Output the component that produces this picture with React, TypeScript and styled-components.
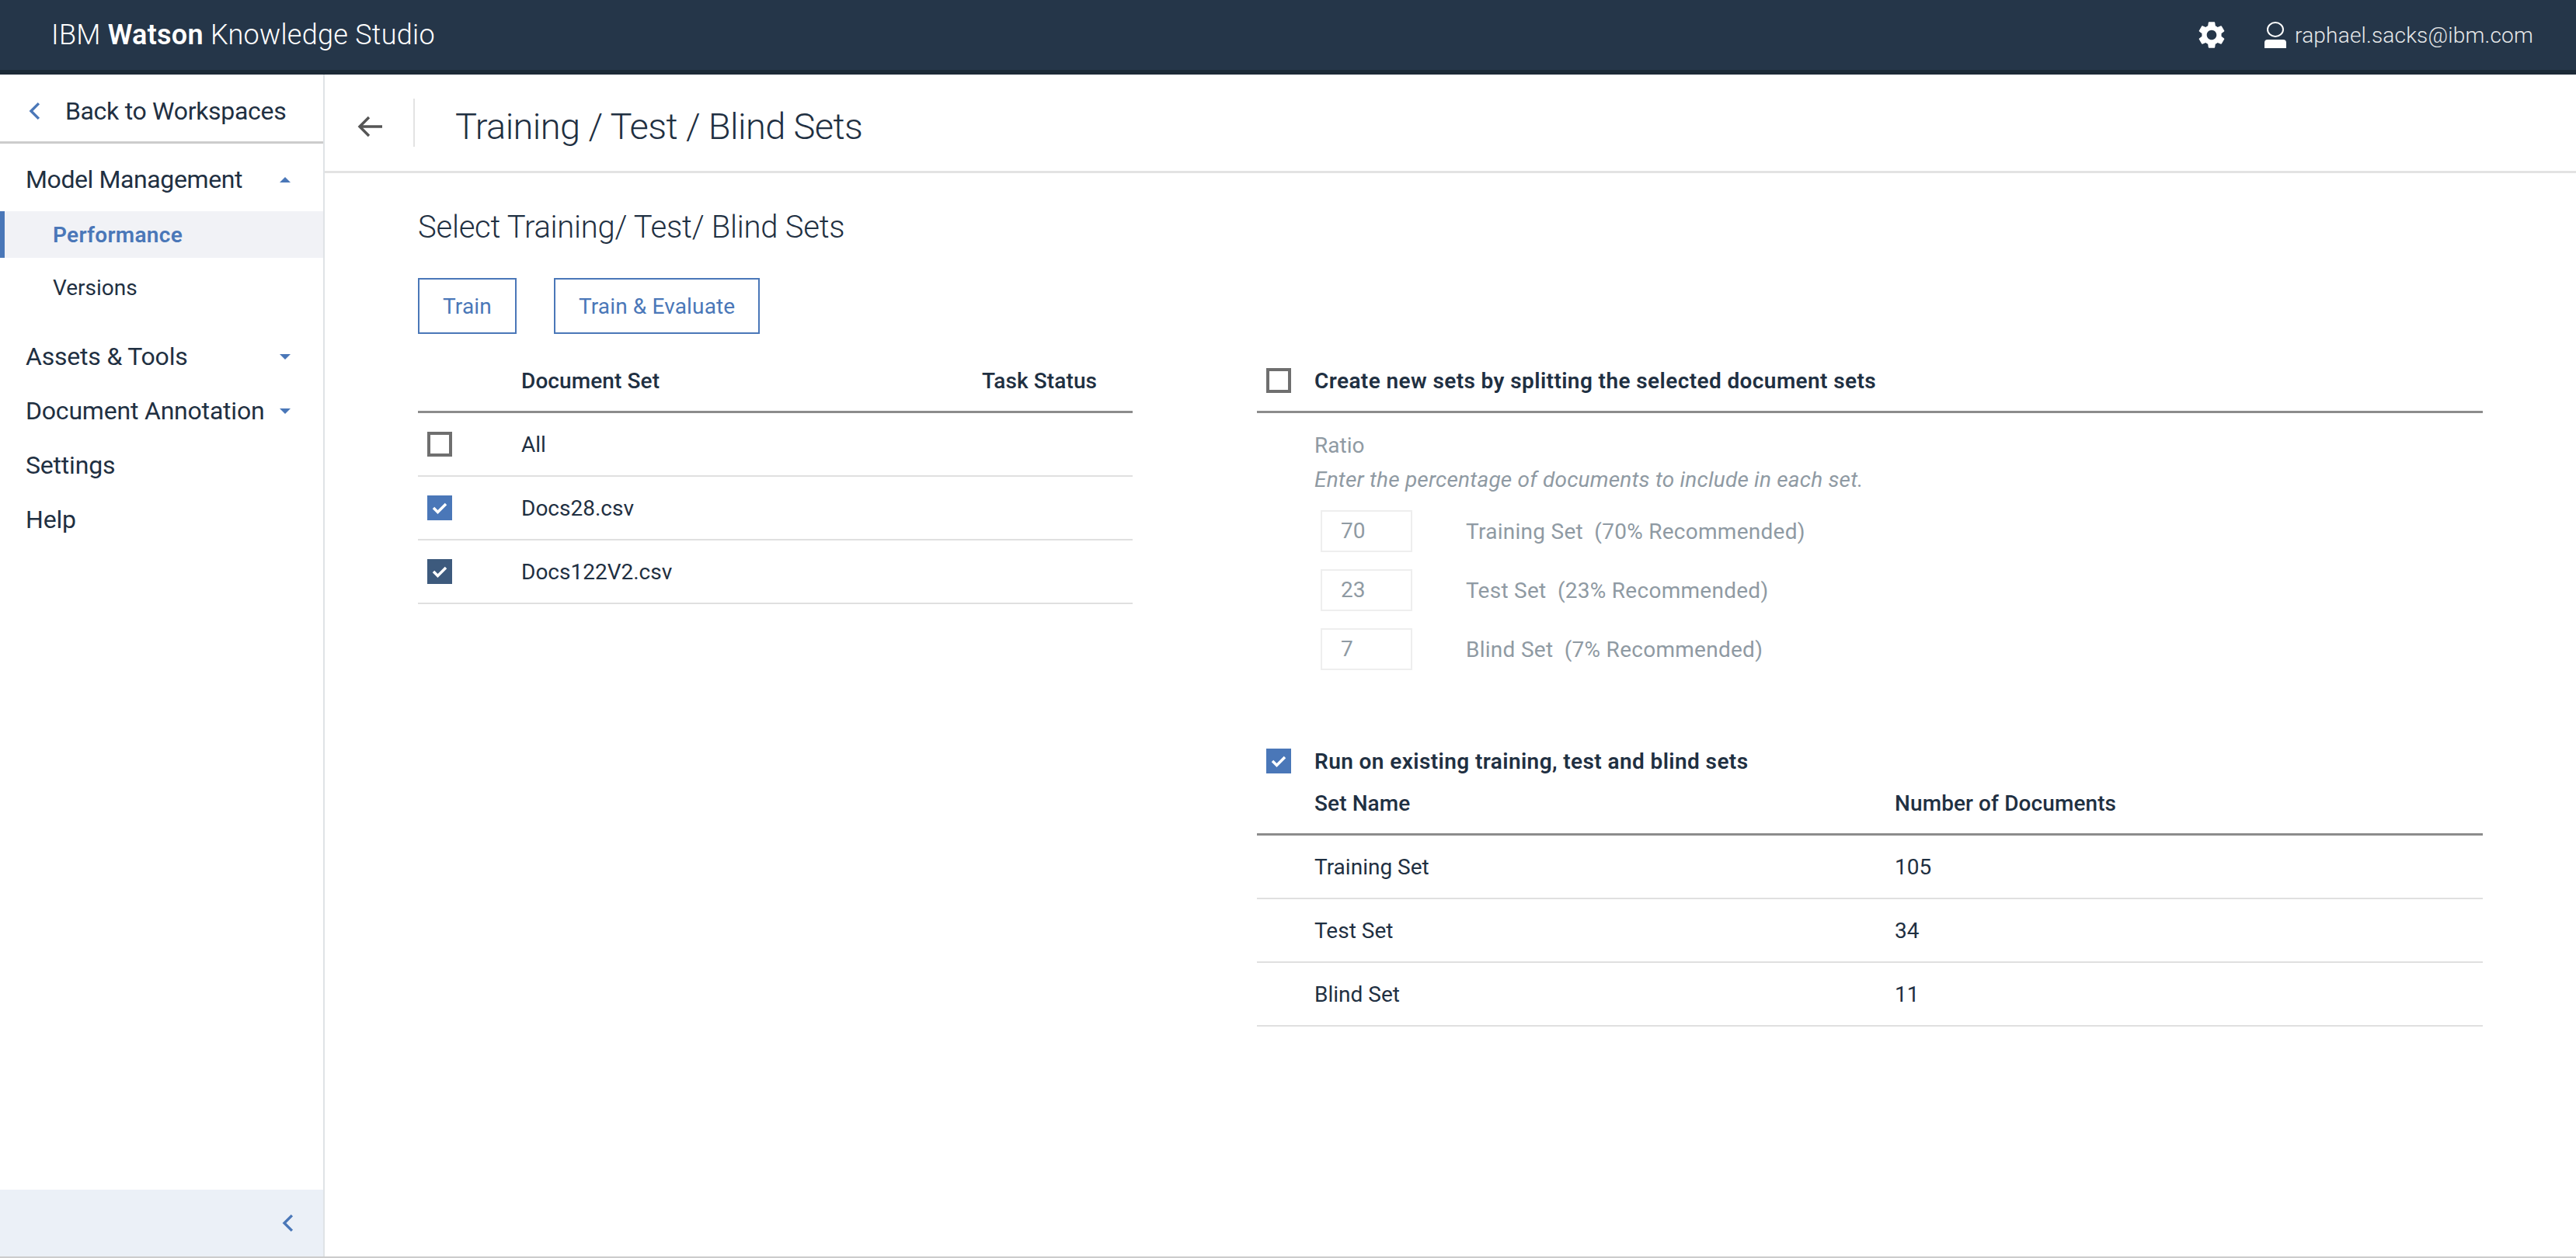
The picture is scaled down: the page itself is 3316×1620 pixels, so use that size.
import React from "react";
import styled, { createGlobalStyle } from "styled-components";
import { MdSettings } from "react-icons/md";

const GlobalStyle = createGlobalStyle`
  html, body {
    margin: 0;
    padding: 0;
    background: #fff;
    font-family: "Roboto", "Noto Sans", sans-serif;
    color: #1f3042;
  }
  * { box-sizing: border-box; }
`;

const blue = "#4a77b8";
const ink = "#1f3042";
const faded = "#8f9aa3";

const Page = styled.div`
  width: 3316px;
  height: 1620px;
  display: flex;
  flex-direction: column;
  border-bottom: 2px solid #ccc;
  overflow: hidden;
`;

const TopBar = styled.header`
  height: 96px;
  flex: none;
  background: #253649;
  border-bottom: 6px solid #1c2a37;
  display: flex;
  align-items: center;
  padding: 0 55px 0 66px;
  color: #fff;
`;

const Brand = styled.div`
  font-size: 36px;
  font-weight: 300;
  letter-spacing: 0.28px;
  flex: 1;
  b { font-weight: 600; }
`;

const GearButton = styled.div`
  display: flex;
  margin-right: 47px;
`;

const UserName = styled.div`
  display: flex;
  align-items: center;
  gap: 11px;
  font-size: 28px;
  font-weight: 300;
  letter-spacing: 0.2px;
  color: #e6e8ea;
`;

const Body = styled.div`
  flex: 1;
  display: flex;
  min-height: 0;
`;

const Sidebar = styled.aside`
  width: 418px;
  flex: none;
  border-right: 2px solid #dfe3e6;
  display: flex;
  flex-direction: column;
`;

const BackLink = styled.div`
  height: 89px;
  flex: none;
  border-bottom: 3px solid #ccc;
  display: flex;
  align-items: center;
  gap: 32px;
  padding: 8px 0 0 37px;
  font-size: 32px;
  letter-spacing: -0.3px;
`;

const Nav = styled.nav`
  flex: 1;
  padding-top: 11px;
`;

const NavItem = styled.div`
  height: 70px;
  display: flex;
  align-items: center;
  justify-content: space-between;
  padding: 0 42px 0 33px;
  font-size: 32px;
  letter-spacing: -0.2px;
`;

const NavParent = styled(NavItem)`
  letter-spacing: -0.4px;
`;

const SubList = styled.div`
  padding: 6px 0 16px;
`;

const SubItem = styled.div<{ $active?: boolean }>`
  height: 60px;
  margin-bottom: 8px;
  display: flex;
  align-items: center;
  padding-left: ${(p) => (p.$active ? 62 : 68)}px;
  font-size: 28px;
  letter-spacing: ${(p) => (p.$active ? 0.3 : 0)}px;
  font-weight: ${(p) => (p.$active ? 600 : 400)};
  color: ${(p) => (p.$active ? blue : ink)};
  background: ${(p) => (p.$active ? "#f1f2f6" : "transparent")};
  border-left: ${(p) => (p.$active ? `6px solid ${blue}` : "none")};
`;

const Caret = styled.span<{ $up?: boolean }>`
  width: 0;
  height: 0;
  border-left: 7px solid transparent;
  border-right: 7px solid transparent;
  ${(p) =>
    p.$up ? `border-bottom: 7px solid ${blue};` : `border-top: 7px solid ${blue};`}
`;

const Collapse = styled.div`
  height: 86px;
  flex: none;
  background: #ebf0f7;
  display: flex;
  align-items: center;
  justify-content: flex-end;
  padding-right: 38px;
`;

const Main = styled.main`
  flex: 1;
  min-width: 0;
  display: flex;
  flex-direction: column;
`;

const TitleBar = styled.div`
  height: 127px;
  flex: none;
  border-bottom: 3px solid #e3e3e3;
  display: flex;
  align-items: center;
  padding-left: 42px;
`;

const BackArrow = styled.div`
  display: flex;
  margin: 10px 40px 0 0;
`;

const TitleDivider = styled.div`
  width: 2px;
  height: 62px;
  background: #e3e3e3;
  margin-right: 52px;
`;

const Title = styled.h1`
  margin: 8px 0 0;
  font-size: 47px;
  font-weight: 300;
  letter-spacing: -0.6px;
`;

const Content = styled.div`
  flex: 1;
  padding: 40px 120px 0 120px;
`;

const Heading = styled.h2`
  margin: 0;
  height: 60px;
  line-height: 60px;
  font-size: 40px;
  font-weight: 300;
  letter-spacing: -0.25px;
`;

const Actions = styled.div`
  display: flex;
  gap: 48px;
  margin-top: 35px;
`;

const OutlineButton = styled.button`
  height: 72px;
  padding: 0 30px;
  background: #fff;
  border: 2px solid ${blue};
  color: ${blue};
  font: inherit;
  font-size: 28px;
  letter-spacing: 0.15px;
`;

const Columns = styled.div`
  display: grid;
  grid-template-columns: 920px 1578px;
  column-gap: 160px;
`;

const HeaderRow = styled.div<{ $cols: string; $height: number; $top?: number; $bottom?: number }>`
  height: ${(p) => p.$height}px;
  display: grid;
  grid-template-columns: ${(p) => p.$cols};
  align-items: center;
  padding: ${(p) => p.$top ?? 0}px 0 ${(p) => p.$bottom ?? 0}px;
  border-bottom: 3px solid #8c8c8c;
  font-size: 28px;
  font-weight: 500;
  letter-spacing: 0.1px;
`;

const DataRow = styled.div<{ $cols: string }>`
  height: 82px;
  display: grid;
  grid-template-columns: ${(p) => p.$cols};
  align-items: center;
  border-bottom: 2px solid #e0e0e0;
  font-size: 28px;
`;

const Box = styled.span<{ $state: "off" | "on" | "dark" }>`
  width: 32px;
  height: 32px;
  margin-left: 12px;
  display: flex;
  align-items: center;
  justify-content: center;
  border: ${(p) => (p.$state === "off" ? "4px solid #6f6f6f" : "none")};
  background: ${(p) =>
    p.$state === "on" ? blue : p.$state === "dark" ? "#3d5a7d" : "#fff"};
`;

const SectionTitle = styled.span`
  font-weight: 600;
  letter-spacing: 0.4px;
`;

const RatioBlock = styled.div`
  padding: 19px 0 0 74px;
  color: ${faded};
  font-size: 28px;
`;

const RatioLabel = styled.div`
  height: 45px;
  line-height: 45px;
`;

const RatioHint = styled.div`
  height: 44px;
  line-height: 44px;
  font-style: italic;
  letter-spacing: 0.2px;
`;

const RatioList = styled.div`
  display: flex;
  flex-direction: column;
  gap: 22px;
  margin-top: 17px;
  padding-left: 8px;
`;

const RatioRow = styled.div`
  display: flex;
  align-items: center;
  height: 54px;
`;

const RatioInput = styled.div`
  width: 118px;
  height: 54px;
  border: 2px solid #eeeeee;
  padding-left: 24px;
  line-height: 50px;
  margin-right: 69px;
`;

const RatioText = styled.span`
  white-space: pre;
  letter-spacing: 0.27px;
`;

const ExistingHead = styled.div`
  margin-top: 92px;
  height: 50px;
  display: grid;
  grid-template-columns: 74px 1fr;
  align-items: center;
  font-size: 28px;
`;

const Check = () => (
  <svg width="20" height="16" viewBox="0 0 20 16">
    <path d="M2 8 L7.5 13.5 L18 3" fill="none" stroke="#fff" strokeWidth="3.5" />
  </svg>
);

const Chevron = ({ height }: { height: number }) => (
  <svg width={height * 0.62} height={height} viewBox="0 0 15 24">
    <path d="M13 2 L3 12 L13 22" fill="none" stroke={blue} strokeWidth="3.4" />
  </svg>
);

const UserIcon = () => (
  <svg width="28" height="34" viewBox="0 0 28 34">
    <ellipse cx="14" cy="10" rx="10" ry="9" fill="none" stroke="#fff" strokeWidth="2" />
    <path d="M0 34 V27 Q0 23 4 23 H24 Q28 23 28 27 V34 Z" fill="#fff" />
  </svg>
);

const docCols = "133px 593px 1fr";
const setCols = "74px 747px 1fr";

const ratios = [
  { value: "70", label: "Training Set  (70% Recommended)" },
  { value: "23", label: "Test Set  (23% Recommended)" },
  { value: "7", label: "Blind Set  (7% Recommended)" },
];

const sets = [
  { name: "Training Set", count: 105 },
  { name: "Test Set", count: 34 },
  { name: "Blind Set", count: 11 },
];

const docs: { name: string; state: "off" | "on" | "dark" }[] = [
  { name: "All", state: "off" },
  { name: "Docs28.csv", state: "on" },
  { name: "Docs122V2.csv", state: "dark" },
];

export default function App() {
  return (
    <Page>
      <GlobalStyle />
      <TopBar>
        <Brand>
          IBM <b>Watson</b> Knowledge Studio
        </Brand>
        <GearButton>
          <MdSettings size={42} color="#fff" />
        </GearButton>
        <UserName>
          <UserIcon />
          raphael.sacks@ibm.com
        </UserName>
      </TopBar>
      <Body>
        <Sidebar>
          <BackLink>
            <Chevron height={24} />
            Back to Workspaces
          </BackLink>
          <Nav>
            <NavParent>
              Model Management <Caret $up />
            </NavParent>
            <SubList>
              <SubItem $active>Performance</SubItem>
              <SubItem>Versions</SubItem>
            </SubList>
            <NavItem>
              Assets &amp; Tools <Caret />
            </NavItem>
            <NavItem>
              Document Annotation <Caret />
            </NavItem>
            <NavItem>Settings</NavItem>
            <NavItem>Help</NavItem>
          </Nav>
          <Collapse>
            <Chevron height={24} />
          </Collapse>
        </Sidebar>
        <Main>
          <TitleBar>
            <BackArrow>
              <svg width="32" height="28" viewBox="0 0 32 28">
                <path
                  d="M15 2 L3 14 L15 26 M3 14 H32"
                  fill="none"
                  stroke="#555"
                  strokeWidth="3.4"
                />
              </svg>
            </BackArrow>
            <TitleDivider />
            <Title>Training / Test / Blind Sets</Title>
          </TitleBar>
          <Content>
            <Heading>Select Training/ Test/ Blind Sets</Heading>
            <Actions>
              <OutlineButton>Train</OutlineButton>
              <OutlineButton>Train &amp; Evaluate</OutlineButton>
            </Actions>
            <Columns>
              <div>
                <HeaderRow $cols={docCols} $height={102} $top={21}>
                  <span />
                  <span>Document Set</span>
                  <span>Task Status</span>
                </HeaderRow>
                {docs.map((d) => (
                  <DataRow key={d.name} $cols={docCols}>
                    <Box $state={d.state}>{d.state !== "off" && <Check />}</Box>
                    <span>{d.name}</span>
                  </DataRow>
                ))}
              </div>
              <div>
                <HeaderRow $cols={setCols} $height={102} $top={21}>
                  <Box $state="off" />
                  <SectionTitle>Create new sets by splitting the selected document sets</SectionTitle>
                </HeaderRow>
                <RatioBlock>
                  <RatioLabel>Ratio</RatioLabel>
                  <RatioHint>Enter the percentage of documents to include in each set.</RatioHint>
                  <RatioList>
                    {ratios.map((r) => (
                      <RatioRow key={r.value}>
                        <RatioInput>{r.value}</RatioInput>
                        <RatioText>{r.label}</RatioText>
                      </RatioRow>
                    ))}
                  </RatioList>
                </RatioBlock>
                <ExistingHead>
                  <Box $state="on">
                    <Check />
                  </Box>
                  <SectionTitle>Run on existing training, test and blind sets</SectionTitle>
                </ExistingHead>
                <HeaderRow $cols={setCols} $height={71} $bottom={9}>
                  <span />
                  <span>Set Name</span>
                  <span>Number of Documents</span>
                </HeaderRow>
                {sets.map((s) => (
                  <DataRow key={s.name} $cols={setCols}>
                    <span />
                    <span>{s.name}</span>
                    <span>{s.count}</span>
                  </DataRow>
                ))}
              </div>
            </Columns>
          </Content>
        </Main>
      </Body>
    </Page>
  );
}
